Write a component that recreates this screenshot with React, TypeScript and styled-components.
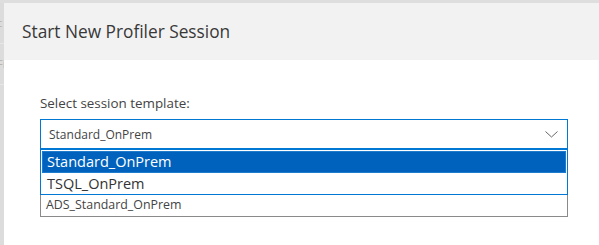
import React from 'react';
import styled, { createGlobalStyle } from 'styled-components';

const GlobalStyle = createGlobalStyle`
  html, body {
    margin: 0;
    padding: 0;
    background: #dedede;
    font-family: "Open Sans", "Noto Sans", sans-serif;
  }
`;

const Page = styled.div`
  display: flex;
  width: 599px;
  height: 245px;
  padding-top: 3px;
  box-sizing: border-box;
  overflow: hidden;
`;

const SideStrip = styled.div`
  width: 4px;
  flex-shrink: 0;
  display: flex;
  flex-direction: column;
  background: #dcdcdc;
  color: #b5b5b5;
  font-size: 11px;
  overflow: hidden;

  span {
    height: 40px;
    line-height: 40px;
    margin-left: -3px;
    border-bottom: 1px solid #e6e6e6;
  }
`;

const Dialog = styled.div`
  flex: 1;
  background: #fff;
  display: flex;
  flex-direction: column;
`;

const Header = styled.div`
  height: 57px;
  background: #f2f2f2;
  display: flex;
  align-items: center;
  padding-left: 18px;

  h2 {
    margin: 0;
    font-size: 17.3px;
    font-weight: 400;
    color: #383838;
  }
`;

const Body = styled.div`
  padding: 33px 0 0 36px;
  width: 528px;
`;

const Label = styled.div`
  font-size: 13.4px;
  color: #444;
  line-height: 20px;
  margin-bottom: 6px;
`;

const SelectBox = styled.div`
  box-sizing: border-box;
  height: 30px;
  border: 1px solid #0078d4;
  display: flex;
  align-items: center;
  justify-content: space-between;
  padding: 0 9px 0 8px;
  font-size: 12px;
  color: #444;

  svg {
    display: block;
  }
`;

const Popup = styled.div`
  border: 1px solid #0078d4;
  padding: 1px 1px 0;
  background: #fff;
`;

const Option = styled.div<{ $selected?: boolean }>`
  box-sizing: border-box;
  height: ${({ $selected }) => ($selected ? '22px' : '21px')};
  line-height: 20px;
  padding-left: 4px;
  font-size: 14.5px;
  color: ${({ $selected }) => ($selected ? '#fff' : '#333')};
  background: ${({ $selected }) => ($selected ? '#0062bd' : '#fff')};
  border: 1px solid ${({ $selected }) => ($selected ? '#1f7ccc' : 'transparent')};
`;

const ListRow = styled.div`
  height: 21px;
  line-height: 20px;
  border: 1px solid #8a8a8a;
  border-top: none;
  padding-left: 5px;
  font-size: 12.4px;
  color: #444;
`;

export default function App() {
  return (
    <>
      <GlobalStyle />
      <Page>
        <SideStrip>
          <span>c</span>
          <span>Fi</span>
        </SideStrip>
        <Dialog>
          <Header>
            <h2>Start New Profiler Session</h2>
          </Header>
          <Body>
            <Label>Select session template:</Label>
            <SelectBox>
              <span>Standard_OnPrem</span>
              <svg width="13" height="7" viewBox="0 0 13 7">
                <path d="M0.5 0.5 L6.5 6 L12.5 0.5" fill="none" stroke="#666" strokeWidth="1" />
              </svg>
            </SelectBox>
            <Popup>
              <Option $selected>Standard_OnPrem</Option>
              <Option>TSQL_OnPrem</Option>
            </Popup>
            <ListRow>ADS_Standard_OnPrem</ListRow>
          </Body>
        </Dialog>
      </Page>
    </>
  );
}
